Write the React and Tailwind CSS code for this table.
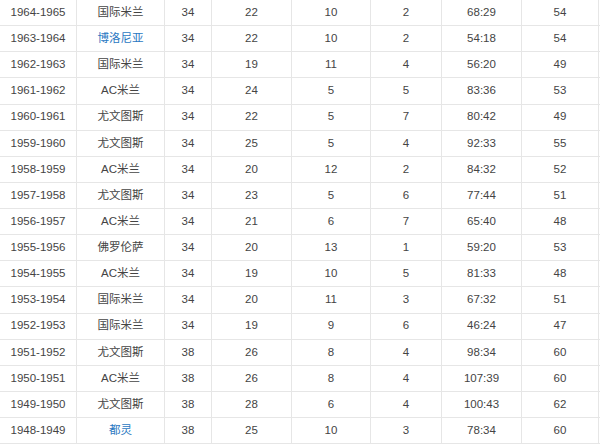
import React from "react";

// 意甲历届冠军 (1948-1965)
const rows = [
  ["1964-1965", "国际米兰", 34, 22, 10, 2, "68:29", 54],
  ["1963-1964", "博洛尼亚", 34, 22, 10, 2, "54:18", 54, true],
  ["1962-1963", "国际米兰", 34, 19, 11, 4, "56:20", 49],
  ["1961-1962", "AC米兰", 34, 24, 5, 5, "83:36", 53],
  ["1960-1961", "尤文图斯", 34, 22, 5, 7, "80:42", 49],
  ["1959-1960", "尤文图斯", 34, 25, 5, 4, "92:33", 55],
  ["1958-1959", "AC米兰", 34, 20, 12, 2, "84:32", 52],
  ["1957-1958", "尤文图斯", 34, 23, 5, 6, "77:44", 51],
  ["1956-1957", "AC米兰", 34, 21, 6, 7, "65:40", 48],
  ["1955-1956", "佛罗伦萨", 34, 20, 13, 1, "59:20", 53],
  ["1954-1955", "AC米兰", 34, 19, 10, 5, "81:33", 48],
  ["1953-1954", "国际米兰", 34, 20, 11, 3, "67:32", 51],
  ["1952-1953", "国际米兰", 34, 19, 9, 6, "46:24", 47],
  ["1951-1952", "尤文图斯", 38, 26, 8, 4, "98:34", 60],
  ["1950-1951", "AC米兰", 38, 26, 8, 4, "107:39", 60],
  ["1949-1950", "尤文图斯", 38, 28, 6, 4, "100:43", 62],
  ["1948-1949", "都灵", 38, 25, 10, 3, "78:34", 60, true],
];

export default function App() {
  return (
    <div
      className="w-[600px] h-[445px] overflow-hidden bg-white text-[#444] text-[11.5px]"
      style={{ fontFamily: '"Liberation Sans", Arial, "Noto Sans CJK SC", sans-serif' }}
    >
      {rows.map((r) => (
        <div
          key={r[0]}
          className="grid grid-cols-[77px_88px_47px_80px_79px_71px_80px_77px] h-[26.125px] border-b border-[#e6e6e6]"
        >
          {r.slice(0, 8).map((c, j) => (
            <div
              key={j}
              className={
                "flex items-center justify-center border-r border-[#e6e6e6] " +
                (j === 1 && r[8] ? "text-[#2a78c2]" : "")
              }
            >
              {c}
            </div>
          ))}
        </div>
      ))}
    </div>
  );
}
